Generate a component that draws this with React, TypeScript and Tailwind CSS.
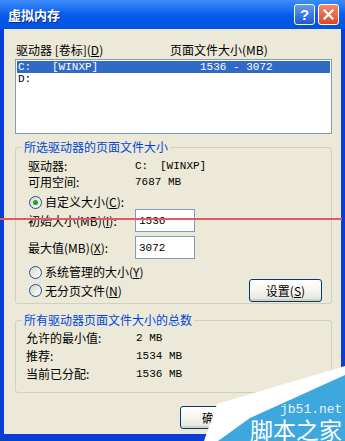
import React from 'react';

// Windows XP style radio circle
const Radio = ({ checked }: { checked?: boolean }) => (
  <span className="w-[13px] h-[13px] shrink-0 rounded-full border border-[#1c5180] bg-linear-to-br from-[#d6d5cd] to-white flex items-center justify-center">
    {checked && <span className="w-[5px] h-[5px] rounded-full bg-[#21a121]" />}
  </span>
);

const TextBox = ({ value }: { value: string }) => (
  <div className="w-[60px] h-[23px] border border-[#7f9db9] bg-white flex items-center pl-[3px] font-['Liberation_Mono',monospace] text-[11px]">
    {value}
  </div>
);

const XpButton = ({ children, className = '' }: { children: React.ReactNode; className?: string }) => (
  <div
    className={`h-[23px] w-[73px] rounded-[3px] border border-[#003c74] bg-linear-to-b from-white via-[#f6f5f1] to-[#e3e2da] shadow-[inset_0_-2px_0_#d6d0c5] flex items-center justify-center ${className}`}
  >
    {children}
  </div>
);

export default function App() {
  return (
    <div className="relative w-[345px] h-[441px] overflow-hidden bg-[#0a3fd6] flex flex-col font-['Noto_Sans_CJK_SC',sans-serif] text-[12px] leading-[14px] text-black">
      {/* title bar */}
      <div className="h-[29px] shrink-0 flex items-center pl-[8px] pr-[6px] bg-linear-to-b from-[#3c8df9] via-[#0a5ceb] to-[#0052e0]">
        <span className="text-white font-bold text-[13px] [text-shadow:1px_1px_0_#0c2a8a]">虚拟内存</span>
        <div className="ml-auto flex gap-[3px]">
          <div className="w-[21px] h-[21px] rounded-[3px] border border-white bg-linear-to-b from-[#5e9bf5] to-[#2257d6] flex items-center justify-center text-white font-bold text-[15px] font-['Liberation_Sans',sans-serif]">
            ?
          </div>
          <div className="w-[21px] h-[21px] rounded-[3px] border border-white bg-linear-to-b from-[#ef8a6a] to-[#d9472a] flex items-center justify-center">
            <svg width="11" height="11" viewBox="0 0 11 11">
              <path d="M1.5 1.5 L9.5 9.5 M9.5 1.5 L1.5 9.5" stroke="white" strokeWidth="2.2" strokeLinecap="square" />
            </svg>
          </div>
        </div>
      </div>

      {/* client area */}
      <div className="flex-1 mx-[4px] mb-[7px] bg-[#ece9d8] flex flex-col pl-[11px] pr-[9px] pt-[14px]">
        <div className="flex items-center h-[14px]">
          <span className="w-[155px] pl-[1px]">驱动器 [卷标](<u>D</u>)</span>
          <span>页面文件大小(MB)</span>
        </div>

        <div className="mt-[2px] h-[75px] border border-[#7f9db9] bg-white p-[1px] font-['Liberation_Mono',monospace] text-[11px]">
          <div className="h-[12px] bg-[#316ac5] text-white flex items-center">
            <span className="w-[35px] pl-[1px]">C:</span>
            <span className="w-[148px]">[WINXP]</span>
            <span>1536 - 3072</span>
          </div>
          <div className="h-[12px] flex items-center pl-[1px]">D:</div>
        </div>

        {/* selected drive */}
        <fieldset className="mt-[6px] border border-[#d0d0bf] rounded-[3px]">
          <legend className="ml-[6px] px-[2px] text-[#0046d5] leading-[14px]">所选驱动器的页面文件大小</legend>
          <div className="pl-[12px] pr-[9px] pt-[5px] pb-[1px] flex flex-col">
            <div className="flex">
              <span className="w-[107px]">驱动器:</span>
              <span className="w-[25px] font-['Liberation_Mono',monospace] text-[11px]">C:</span>
              <span className="font-['Liberation_Mono',monospace] text-[11px]">[WINXP]</span>
            </div>
            <div className="flex mt-[2px]">
              <span className="w-[107px]">可用空间:</span>
              <span className="font-['Liberation_Mono',monospace] text-[11px]">7687 MB</span>
            </div>
            <div className="flex items-center gap-[3px] mt-[6px] ml-[1px]">
              <Radio checked />
              <span>自定义大小(<u>C</u>):</span>
            </div>
            <div className="flex items-center h-[23px]">
              <span className="w-[107px]">初始大小(MB)(<u>I</u>):</span>
              <TextBox value="1536" />
            </div>
            <div className="flex items-center h-[23px] mt-[4px]">
              <span className="w-[107px]">最大值(MB)(<u>X</u>):</span>
              <TextBox value="3072" />
            </div>
            <div className="flex items-center gap-[3px] mt-[6px] ml-[1px]">
              <Radio />
              <span>系统管理的大小(<u>Y</u>)</span>
            </div>
            <div className="flex items-center h-[23px] ml-[1px]">
              <Radio />
              <span className="ml-[3px]">无分页文件(<u>N</u>)</span>
              <XpButton className="ml-auto">设置(<u>S</u>)</XpButton>
            </div>
          </div>
        </fieldset>

        {/* totals */}
        <fieldset className="mt-[9px] border border-[#d0d0bf] rounded-[3px]">
          <legend className="ml-[6px] px-[2px] text-[#0046d5] leading-[14px]">所有驱动器页面文件大小的总数</legend>
          <div className="pl-[10px] pt-[4px] pb-[11px] flex flex-col gap-[4px]">
            <div className="flex">
              <span className="w-[110px]">允许的最小值:</span>
              <span className="font-['Liberation_Mono',monospace] text-[11px]">2 MB</span>
            </div>
            <div className="flex">
              <span className="w-[110px]">推荐:</span>
              <span className="font-['Liberation_Mono',monospace] text-[11px]">1534 MB</span>
            </div>
            <div className="flex">
              <span className="w-[110px]">当前已分配:</span>
              <span className="font-['Liberation_Mono',monospace] text-[11px]">1536 MB</span>
            </div>
          </div>
        </fieldset>

        <div className="flex mt-[13px] ml-[165px]">
          <XpButton className="w-[75px] h-[21px] justify-start pl-[21px]">确定</XpButton>
        </div>
      </div>

      {/* red guide line drawn over the screenshot */}
      <div className="absolute left-0 top-[218px] w-[342px] h-[2px] bg-[#e45864]" />

      {/* watermark */}
      <svg className="absolute left-[190px] top-[360px]" width="155" height="81" viewBox="0 0 155 81">
        <polygon points="14,81 27,44 155,6 155,81" fill="white" />
        <polygon points="28,81 60,58 155,15 155,81" fill="#3ea7de" />
      </svg>
      <span className="absolute left-[280px] top-[403px] text-[13px] leading-[14px] text-[#e3f3fb] font-['Liberation_Mono',monospace]">
        jb51.net
      </span>
      <span className="absolute left-[250px] top-[418px] text-[23px] leading-[22px] text-white">脚本之家</span>
    </div>
  );
}
